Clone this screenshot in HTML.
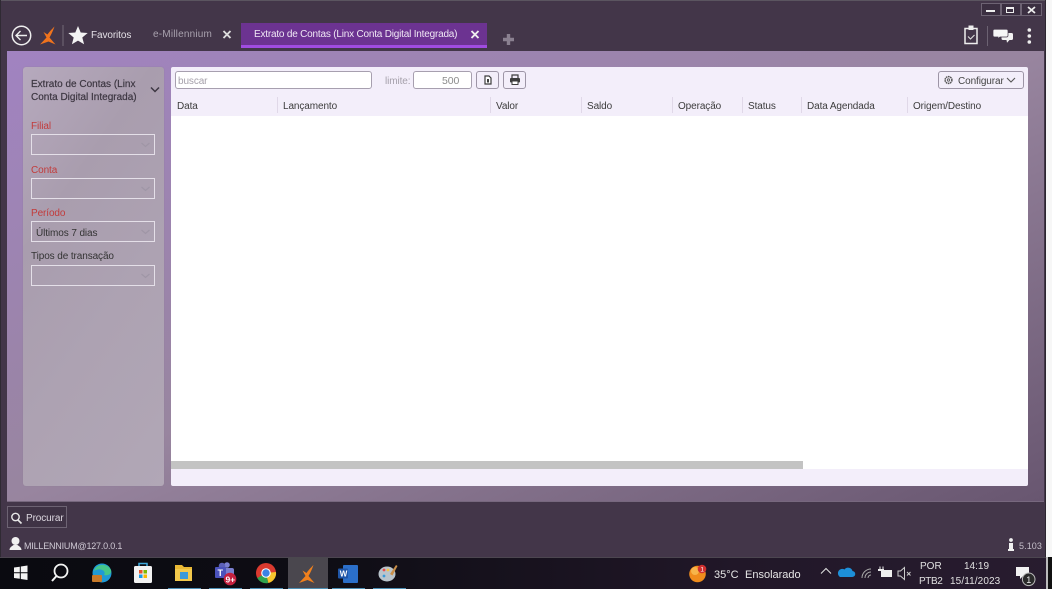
<!DOCTYPE html>
<html style="background:#433649"><head><meta charset="utf-8"><style>
*{box-sizing:border-box}
html,body{margin:0;padding:0}
body{width:1052px;height:589px;overflow:hidden;position:relative;background:#433649;font-family:"Liberation Sans",sans-serif;font-size:10px;letter-spacing:-.1px;color:#333;filter:blur(.3px)}
.a{position:absolute;white-space:nowrap}
svg{position:absolute;overflow:visible}
.hd{top:101px;color:#3c3c3c;font-size:10px}
.sep{top:97px;width:1px;height:16px;background:#e0d8e8}
.lb{left:31px;font-size:10px}
.cb{left:31px;width:124px;height:21px;border:1px solid #e4dfe8}
.cb svg{right:0;top:0}
.btn{border:1px solid #9d95a6;border-radius:3px;background:#f3eefa}
.tb{letter-spacing:0}
</style></head><body>
<div class="a" style="left:0;top:0;width:1052px;height:1px;background:#5b5560"></div>
<div class="a" style="left:0;top:0;width:1px;height:557px;background:#2f2a33"></div>
<div class="a" style="left:1046px;top:0;width:6px;height:557px;background:#f7f7f7"></div>
<div class="a" style="left:1045px;top:0;width:1px;height:557px;background:#2c2630"></div>

<!-- window buttons -->
<div class="a" style="left:981px;top:3px;width:20px;height:13px;border:1px solid #6d6373;background:#3b2f41"></div>
<div class="a" style="left:1001px;top:3px;width:20px;height:13px;border:1px solid #6d6373;background:#3b2f41"></div>
<div class="a" style="left:1021px;top:3px;width:21px;height:13px;border:1px solid #6d6373;background:#3b2f41"></div>
<div class="a" style="left:986px;top:10px;width:9px;height:2px;background:#eee"></div>
<div class="a" style="left:1006px;top:7px;width:8px;height:6px;border:1.500px solid #eee;border-top-width:2px"></div>
<svg style="left:0;top:0" width="1052" height="60"><path d="M1028 7l7 6M1035 7l-7 6" stroke="#eee" stroke-width="1.800" fill="none"/></svg>

<!-- title bar left -->
<svg style="left:0;top:0" width="140" height="50">
<circle cx="21.500" cy="35.500" r="9.200" fill="none" stroke="#eee" stroke-width="1.500"/>
<path d="M27 35.500H16.500M20.500 31l-4.500 4.500 4.500 4.500" fill="none" stroke="#eee" stroke-width="1.400"/>
<path d="M54.500 26.500C52.500 32 51 35 49.500 37.500L55.500 44.500 48.500 41.500 40 44.500 46.500 37.500 43.500 32 47.500 34.500C50 31 52 29 54.500 26.500Z" fill="#f0731d"/>
<rect x="62.500" y="25" width="1" height="21" fill="#736a78"/>
<path d="M78 26l2.700 6.500 7 .5-5.400 4.500 1.800 6.800-6.100-3.700-6.100 3.700 1.800-6.800-5.400-4.500 7-.5z" fill="#f4f4f4"/>
</svg>
<div class="a" style="left:91px;top:30px;color:#e4e0e6;font-size:10px">Favoritos</div>
<div class="a" style="left:153px;top:29px;color:#a9a2ae;font-size:10px;letter-spacing:.2px">e-Millennium</div>
<svg style="left:0;top:0" width="300" height="50"><path d="M223.500 31l7 7M230.500 31l-7 7" stroke="#ddd" stroke-width="1.900"/></svg>

<!-- active tab -->
<div class="a" style="left:241px;top:23px;width:246px;height:25px;background:#6c3391;border-bottom:3px solid #a04ce0"></div>
<div class="a" style="left:254px;top:29px;color:#f0e8f5;font-size:10px;letter-spacing:-.2px">Extrato de Contas (Linx Conta Digital Integrada)</div>
<svg style="left:0;top:0" width="530" height="50"><path d="M471.500 31l7 7M478.500 31l-7 7" stroke="#eee" stroke-width="1.900"/><path d="M508.500 34v11M503 39.500h11" stroke="#8a8090" stroke-width="3.400"/></svg>

<!-- title bar right -->
<svg style="left:960px;top:20px" width="80" height="30">
<path d="M5 8.500H17V23.500H5Z" fill="none" stroke="#eee" stroke-width="1.500"/>
<rect x="8.500" y="5.500" width="5" height="4.500" fill="#eee"/>
<path d="M8 16.500l2.500 2.500 4-4" stroke="#ddd" stroke-width="1.100" fill="none"/>
<rect x="27" y="6" width="1" height="20" fill="#6c6272"/>
<path d="M43.500 13h8a1.500 1.500 0 0 1 1.500 1.500v4a1.500 1.500 0 0 1-1.500 1.500h-2l-2.500 2.700-.5-2.700h-3.500a1.500 1.500 0 0 1-1.500-1.500v-4a1.500 1.500 0 0 1 1.500-1.500z" fill="#f2f2f2"/>
<path d="M34.500 9.300h12a1.500 1.500 0 0 1 1.500 1.500v4.700a1.500 1.500 0 0 1-1.500 1.500h-6.500l-2 1.700v-1.700h-3.500a1.500 1.500 0 0 1-1.500-1.500v-4.700a1.500 1.500 0 0 1 1.500-1.500z" fill="#f6f6f6" stroke="#433649" stroke-width=".7"/>
<circle cx="69.300" cy="10" r="1.800" fill="#eee"/><circle cx="69.300" cy="16" r="1.800" fill="#eee"/><circle cx="69.300" cy="22" r="1.800" fill="#eee"/>
</svg>

<!-- main panel -->
<div class="a" style="left:7px;top:51px;width:1037px;height:451px;background:linear-gradient(to bottom right,#a183c1 0%,#98859f 50%,#685670 100%);border-bottom:1px solid #77687e"></div>

<!-- left panel -->
<div class="a" style="left:23px;top:67px;width:141px;height:419px;border-radius:3px;background:linear-gradient(125deg,#b6a9bd 0%,#a99dae 30%,#ada2b2 60%,#b1a7b6 100%);box-shadow:0 0 1px #8d7f94"></div>
<div class="a" style="left:31px;top:78px;font-size:10px;letter-spacing:0;line-height:13px;color:#3d3742;-webkit-text-stroke:.2px #3d3742">Extrato de Contas (Linx<br>Conta Digital Integrada)</div>
<svg style="left:0;top:0" width="170" height="100"><path d="M151 87.500l4 4 4-4" stroke="#3d3742" stroke-width="1.500" fill="none"/></svg>

<div class="a lb" style="top:121px;color:#c23b3b">Filial</div>
<div class="a cb" style="top:134px"><svg width="16" height="19"><path d="M3.500 8l4 3.500 4-3.500" stroke="#9f96a6" stroke-width="1.200" fill="none"/></svg></div>
<div class="a lb" style="top:165px;color:#c23b3b">Conta</div>
<div class="a cb" style="top:178px"><svg width="16" height="19"><path d="M3.500 8l4 3.500 4-3.500" stroke="#9f96a6" stroke-width="1.200" fill="none"/></svg></div>
<div class="a lb" style="top:208px;color:#c23b3b">Período</div>
<div class="a cb" style="top:221px"><svg width="16" height="19"><path d="M3.500 8l4 3.500 4-3.500" stroke="#9f96a6" stroke-width="1.200" fill="none"/></svg></div>
<div class="a" style="left:36px;top:228px;color:#333;font-size:10px">Últimos 7 dias</div>
<div class="a lb" style="top:251px;color:#333">Tipos de transação</div>
<div class="a cb" style="top:265px"><svg width="16" height="19"><path d="M3.500 8l4 3.500 4-3.500" stroke="#9f96a6" stroke-width="1.200" fill="none"/></svg></div>

<!-- grid panel -->
<div class="a" style="left:171px;top:67px;width:857px;height:419px;background:#f3eefa;border-radius:2px"></div>
<div class="a" style="left:171px;top:116px;width:857px;height:353px;background:#fff"></div>
<div class="a" style="left:171px;top:461px;width:632px;height:8px;background:#c3c3c3"></div>

<div class="a" style="left:175px;top:71px;width:197px;height:18px;background:#fff;border:1px solid #a79faf;border-radius:3px"></div>
<div class="a" style="left:178px;top:76px;color:#a5a0aa;font-size:10px">buscar</div>
<div class="a" style="left:385px;top:76px;color:#a5a0aa;font-size:10px">limite:</div>
<div class="a" style="left:413px;top:71px;width:59px;height:18px;background:#fff;border:1px solid #a79faf;border-radius:3px"></div>
<div class="a" style="left:442px;top:75px;color:#8c8c8c;font-size:10.500px">500</div>
<div class="a btn" style="left:476px;top:71px;width:23px;height:18px"></div>
<div class="a btn" style="left:503px;top:71px;width:23px;height:18px"></div>
<svg style="left:0;top:0" width="530" height="90">
<path d="M485 76h4l2 2v6h-6z" fill="#fff" stroke="#3d3d3d" stroke-width="1.200"/><rect x="487" y="79" width="2" height="3.500" fill="#3d3d3d"/>
<path d="M512 78v-3h6v3" fill="none" stroke="#3d3d3d" stroke-width="1.200"/><rect x="510" y="78" width="10" height="4.500" rx="1" fill="#3d3d3d"/><rect x="512" y="81" width="6" height="3.500" fill="#fff" stroke="#3d3d3d"/>
</svg>
<div class="a btn" style="left:938px;top:71px;width:86px;height:18px"></div>
<svg style="left:0;top:0" width="1030" height="90">
<circle cx="948.500" cy="80" r="3.400" fill="none" stroke="#555" stroke-width="1.500" stroke-dasharray="1.600 .6"/><circle cx="948.500" cy="80" r="1.200" fill="none" stroke="#555" stroke-width=".8"/>
<path d="M1007 78l4 4 4-4" stroke="#555" stroke-width="1.100" fill="none"/>
</svg>
<div class="a" style="left:958px;top:76px;color:#444;font-size:10px">Configurar</div>

<div class="a hd" style="left:177px">Data</div><div class="a sep" style="left:277px"></div>
<div class="a hd" style="left:283px">Lançamento</div><div class="a sep" style="left:490px"></div>
<div class="a hd" style="left:496px">Valor</div><div class="a sep" style="left:581px"></div>
<div class="a hd" style="left:587px">Saldo</div><div class="a sep" style="left:672px"></div>
<div class="a hd" style="left:678px">Operação</div><div class="a sep" style="left:742px"></div>
<div class="a hd" style="left:748px">Status</div><div class="a sep" style="left:801px"></div>
<div class="a hd" style="left:807px">Data Agendada</div><div class="a sep" style="left:907px"></div>
<div class="a hd" style="left:913px">Origem/Destino</div>

<!-- bottom bar -->
<div class="a" style="left:7px;top:506px;width:60px;height:22px;border:1px solid #6d6373;background:#3f3345"></div>
<svg style="left:0;top:0" width="40" height="560"><circle cx="15.500" cy="517" r="3.700" fill="none" stroke="#e8e8e8" stroke-width="1.400"/><path d="M18 520l3.500 3.500" stroke="#e8e8e8" stroke-width="1.600"/>
<circle cx="15.500" cy="541" r="4" fill="#f0f0f0"/><path d="M9.500 550c0-3 3-4 4-5h4c1 1 4 2 4 5z" fill="#f0f0f0"/></svg>
<div class="a" style="left:26px;top:513px;color:#ddd8e0;font-size:10px">Procurar</div>
<div class="a" style="left:24px;top:541px;color:#cfc9d4;font-size:9px;letter-spacing:-.2px">MILLENNIUM@127.0.0.1</div>
<svg style="left:1005px;top:538px" width="14" height="14"><circle cx="6" cy="2" r="1.900" fill="#f0f0f0"/><path d="M4 5h4v6h1v2H3v-2h1z" fill="#f0f0f0"/></svg>
<div class="a" style="left:1019px;top:541px;color:#c5bfca;font-size:9px;letter-spacing:.1px">5.103</div>

<!-- taskbar -->
<div class="a" style="left:0;top:557px;width:1052px;height:32px;background:linear-gradient(90deg,#0a0a10 0%,#0e0d14 30%,#211728 70%,#281c2f 100%);border-top:1px solid #4c4650"></div>
<div class="a" style="left:288px;top:557px;width:40px;height:32px;background:#4a474e"></div>
<svg style="left:0;top:557px" width="440" height="32">
<path d="M14 10.500l5.800-.8v5.500H14zM20.800 9.500l6.700-1v6.700h-6.700zM14 16.300h5.800v5.500l-5.800-.8zM20.800 16.300h6.700v6.700l-6.700-1z" fill="#f4f4f4"/>
<circle cx="61" cy="14" r="6.500" fill="none" stroke="#f4f4f4" stroke-width="1.800"/><path d="M56.500 19l-4.500 5" stroke="#f4f4f4" stroke-width="2"/>
<circle cx="102" cy="16" r="9.500" fill="#1f9ad6"/><path d="M94 14c2-8 14-8 17-1 1 4-3 6-7 5 3-4-4-8-10-4z" fill="#45c68a"/><rect x="92" y="18" width="10" height="7" rx="1" fill="#c77a2a"/>
<rect x="134" y="9" width="18" height="17" rx="1.500" fill="#f2f2f2"/><path d="M139 9V6.500h8V9" stroke="#3fa9dc" fill="none" stroke-width="1.500"/>
<rect x="139" y="13" width="3.500" height="3.500" fill="#e8542a"/><rect x="143.500" y="13" width="3.500" height="3.500" fill="#7fba00"/><rect x="139" y="17.500" width="3.500" height="3.500" fill="#1a9be6"/><rect x="143.500" y="17.500" width="3.500" height="3.500" fill="#fbb900"/>
<path d="M175 8h7l2 2h8v14h-17z" fill="#e9b935"/><rect x="175" y="12" width="17" height="12" fill="#f2c94c"/><rect x="180" y="15" width="8" height="7" fill="#3a9ad9"/>
<circle cx="227" cy="8" r="2.800" fill="#7a7fd0"/><circle cx="222" cy="9" r="3.300" fill="#5b60b8"/><rect x="224" y="11" width="10" height="9" rx="2" fill="#7a7fd0"/><rect x="215" y="10" width="11" height="11" rx="1" fill="#4b53bc"/><text x="217.500" y="19" fill="#fff" font-size="9" font-family="Liberation Sans" font-weight="bold">T</text>
<circle cx="230" cy="22" r="6.300" fill="#c4213f"/><text x="225.500" y="25.500" fill="#fff" font-size="8.500" font-family="Liberation Sans" font-weight="bold">9+</text>
<circle cx="266" cy="16" r="10" fill="#db3a2f"/><path d="M266 16L257.300 21a10 10 0 0 0 11 5z" fill="#2ea44f"/><path d="M266 16l10-1a10 10 0 0 1-7.500 11z" fill="#f7c52d"/><circle cx="266" cy="16" r="4.800" fill="#fff"/><circle cx="266" cy="16" r="3.700" fill="#3b82e4"/>
<path transform="translate(259,-18.500)" d="M54.500 26.500C52.500 32 51 35 49.500 37.500L55.500 44.500 48.500 41.500 40 44.500 46.500 37.500 43.500 32 47.500 34.500C50 31 52 29 54.500 26.500Z" fill="#f0801d"/>
<rect x="343" y="8" width="15" height="18" rx="1" fill="#2b6fc9"/><rect x="338" y="11.500" width="10" height="10" rx="1" fill="#1f56a8"/><text x="339.800" y="19.700" fill="#fff" font-size="8" font-family="Liberation Sans" font-weight="bold">W</text>
<ellipse cx="387" cy="17" rx="8.500" ry="7.500" fill="#b9c4cc"/><circle cx="384" cy="13" r="1.400" fill="#e84d4d"/><circle cx="388" cy="13" r="1.400" fill="#f4c542"/><circle cx="384" cy="19" r="1.400" fill="#3a9ad9"/><path d="M390 17l6-9 1.500 1-5 9.500z" fill="#c98f4a"/>
<g fill="#4d8fb5"><rect x="168" y="31" width="33" height="1"/><rect x="209" y="31" width="33" height="1"/><rect x="250" y="31" width="33" height="1"/><rect x="288" y="31" width="40" height="1"/><rect x="332" y="31" width="33" height="1"/><rect x="373" y="31" width="33" height="1"/></g>
</svg>

<svg style="left:680px;top:557px" width="372" height="32">
<circle cx="17.500" cy="17" r="8.300" fill="#f08c1c"/><circle cx="15" cy="14" r="4" fill="#f7b54a"/><circle cx="22" cy="12" r="4.300" fill="#d0302f"/>
<text x="20.400" y="14.700" fill="#fff" font-size="6.500" font-family="Liberation Sans">1</text>
<path d="M141 16.500l5-5 5 5" fill="none" stroke="#ddd" stroke-width="1.100"/>
<path d="M160 20h12a3 3 0 0 0 .5-6 4.500 4.500 0 0 0-8-1.500 4 4 0 0 0-4.500 7.500z" fill="#1d8fd8"/>
<path d="M182 21a9 9 0 0 1 9-9M185 21a6 6 0 0 1 6-6M188 21a3 3 0 0 1 3-3" fill="none" stroke="#aaa" stroke-width="1"/>
<rect x="201" y="13" width="11" height="7" fill="#eee"/><rect x="199.500" y="9.500" width="1" height="3" fill="#eee"/><rect x="202.500" y="9.500" width="1" height="3" fill="#eee"/><rect x="198" y="12" width="6" height="2" fill="#eee"/>
<path d="M218 14h2.500l4-3.500v12l-4-3.500H218z" fill="none" stroke="#ccc"/><path d="M227 15l3.500 3.500M230.500 15l-3.500 3.500" stroke="#ccc"/>
<path d="M336 10h13v9h-6l-3 3v-3h-4z" fill="#f2f2f2"/>
<circle cx="348.700" cy="22.300" r="6.300" fill="#2a2a2a" stroke="#bbb"/><text x="346.200" y="25.800" fill="#eee" font-size="9" font-family="Liberation Sans">1</text>
</svg>
<div class="a tb" style="left:714px;top:569px;color:#e6e6e6;font-size:11px">35°C</div>
<div class="a tb" style="left:745px;top:569px;color:#e6e6e6;font-size:11px">Ensolarado</div>
<div class="a tb" style="left:920px;top:561px;color:#e0e0e0;font-size:10px">POR</div>
<div class="a tb" style="left:919px;top:576px;color:#e0e0e0;font-size:10px;letter-spacing:-.4px">PTB2</div>
<div class="a tb" style="left:964px;top:561px;color:#e0e0e0;font-size:10px">14:19</div>
<div class="a tb" style="left:950px;top:576px;color:#e0e0e0;font-size:10px;letter-spacing:.1px">15/11/2023</div>
<div class="a" style="left:1046px;top:557px;width:6px;height:32px;background:#111"></div>
<div class="a" style="left:1046px;top:557px;width:2px;height:32px;background:#bbb"></div>
</body></html>
